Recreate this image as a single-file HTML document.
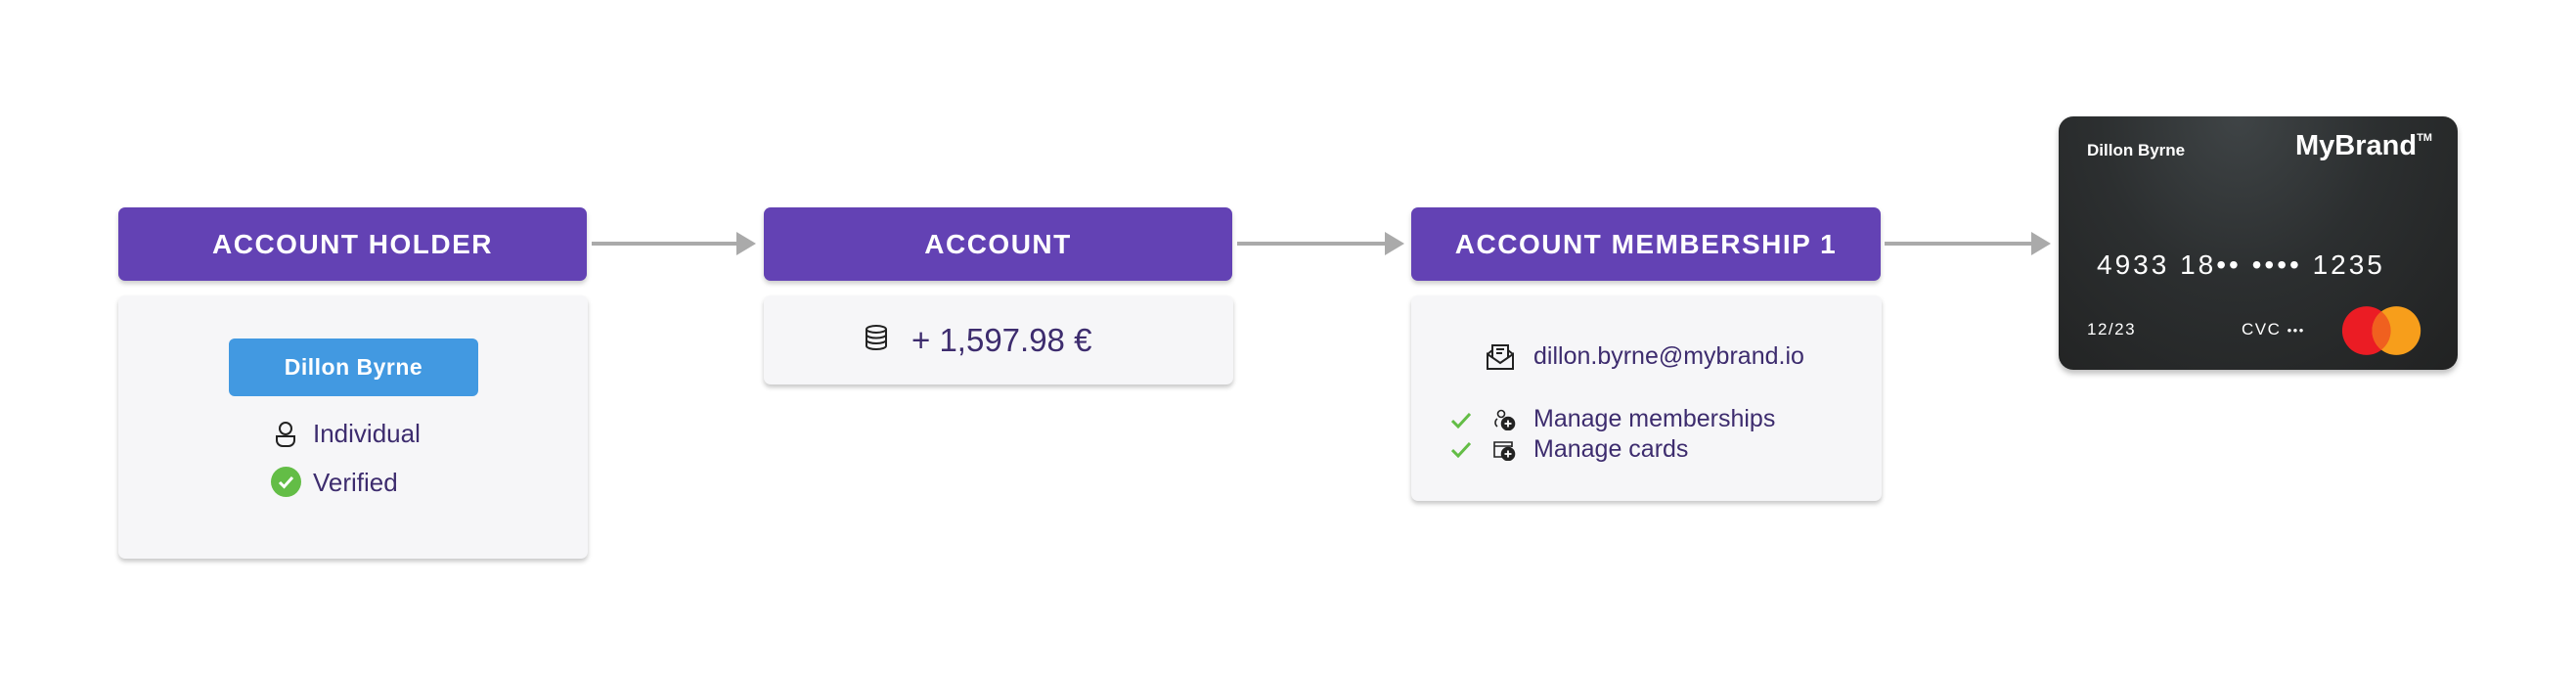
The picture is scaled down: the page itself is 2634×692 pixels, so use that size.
<!DOCTYPE html>
<html><head><meta charset="utf-8"><style>
*{margin:0;padding:0;box-sizing:border-box}
body{width:2634px;height:692px;background:#fff;position:relative;overflow:hidden;font-family:"Liberation Sans",sans-serif}
.hd{position:absolute;top:212px;height:75px;background:#6342b4;border-radius:7px;color:#fff;font-weight:bold;font-size:28px;letter-spacing:1.5px;display:flex;align-items:center;justify-content:center;box-shadow:0 3px 5px rgba(0,0,0,.2)}
.bd{position:absolute;top:302px;background:#f6f6f8;border-radius:7px;box-shadow:0 3px 5px rgba(0,0,0,.22)}
.t{position:absolute;color:#3d2c6e;font-size:26px;line-height:30px;white-space:nowrap}
.arr{position:absolute;top:247px;height:4px;background:#aaa}
.arr:after{content:"";position:absolute;right:-4px;top:-10px;border-left:20px solid #aaa;border-top:12px solid transparent;border-bottom:12px solid transparent}
svg{position:absolute}
</style></head><body>
<div class="hd" style="left:121px;width:479px">ACCOUNT HOLDER</div>
<div class="bd" style="left:121px;width:480px;height:269px"></div>
<div style="position:absolute;left:234px;top:346px;width:255px;height:59px;background:#4299e1;border-radius:6px;color:#fff;font-weight:bold;font-size:23px;letter-spacing:.5px;display:flex;align-items:center;justify-content:center">Dillon Byrne</div>
<svg style="left:280px;top:430px" width="24" height="28" viewBox="0 0 24 28" fill="none" stroke="#222" stroke-width="2"><circle cx="12" cy="8" r="6"/><path d="M3 16h18v4a6 6 0 0 1-6 6H9a6 6 0 0 1-6-6z"/></svg>
<div class="t" style="left:320px;top:428px">Individual</div>
<svg style="left:277px;top:477px" width="31" height="31" viewBox="0 0 31 31"><circle cx="15.5" cy="15.5" r="15.5" fill="#63bd46"/><path d="M9 16l4.5 4.5L22 11" stroke="#fff" stroke-width="3" fill="none"/></svg>
<div class="t" style="left:320px;top:478px">Verified</div>
<div class="arr" style="left:605px;width:164px"></div>

<div class="hd" style="left:781px;width:479px">ACCOUNT</div>
<div class="bd" style="left:781px;width:480px;height:91px"></div>
<svg style="left:884px;top:332px" width="24" height="28" viewBox="0 0 24 28" fill="none" stroke="#222" stroke-width="2"><ellipse cx="12" cy="4.5" rx="10" ry="3.5"/><path d="M2 4.5v17c0 2 4.5 3.5 10 3.5s10-1.5 10-3.5v-17M2 10c0 2 4.5 3.5 10 3.5S22 12 22 10M2 15.5c0 2 4.5 3.5 10 3.5s10-1.5 10-3.5"/></svg>
<div class="t" style="left:932px;top:329px;font-size:33px;line-height:38px">+ 1,597.98 €</div>
<div class="arr" style="left:1265px;width:167px"></div>

<div class="hd" style="left:1443px;width:480px">ACCOUNT MEMBERSHIP 1</div>
<div class="bd" style="left:1443px;width:481px;height:210px"></div>
<svg style="left:1519px;top:351px" width="30" height="28" viewBox="0 0 30 28" fill="none" stroke="#222" stroke-width="2"><path d="M2 11l13 9 13-9v15H2z"/><path d="M2 11l5-4M28 11l-5-4M7 14V2h16v12"/><path d="M11 6h8M11 10h6"/></svg>
<div class="t" style="left:1568px;top:349px;font-size:25px">dillon.byrne@mybrand.io</div>
<svg style="left:1484px;top:422px" width="20" height="16" viewBox="0 0 20 16"><path d="M1 8l6 6L19 1" stroke="#63bd46" stroke-width="3" fill="none"/></svg>
<svg style="left:1484px;top:452px" width="20" height="16" viewBox="0 0 20 16"><path d="M1 8l6 6L19 1" stroke="#63bd46" stroke-width="3" fill="none"/></svg>
<svg style="left:1526px;top:418px" width="24" height="22" viewBox="0 0 24 22" fill="none" stroke="#222" stroke-width="1.6"><circle cx="9" cy="5" r="3.5"/><path d="M5 18a5 5 0 0 1 0-8"/><circle cx="16" cy="15" r="6.5" fill="#222"/><path d="M16 11.5v7M12.5 15h7" stroke="#fff" stroke-width="1.8"/></svg>
<svg style="left:1526px;top:449px" width="24" height="22" viewBox="0 0 24 22" fill="none" stroke="#222" stroke-width="1.6"><path d="M10 18H2V3h18v5M2 7h18"/><circle cx="16" cy="15" r="6.5" fill="#222"/><path d="M16 11.5v7M12.5 15h7" stroke="#fff" stroke-width="1.8"/></svg>
<div class="t" style="left:1568px;top:413px;font-size:25px">Manage memberships</div>
<div class="t" style="left:1568px;top:444px;font-size:25px">Manage cards</div>
<div class="arr" style="left:1927px;width:166px"></div>

<div style="position:absolute;left:2105px;top:119px;width:408px;height:259px;border-radius:15px;background:radial-gradient(ellipse at 45% 0%,#3f4446 0%,#2c2f30 45%,#212222 100%);box-shadow:0 4px 6px rgba(0,0,0,.25)"></div>
<div style="position:absolute;left:2134px;top:144px;color:#fff;font-size:17px;font-weight:bold">Dillon Byrne</div>
<div style="position:absolute;left:2347px;top:133px;color:#fff;font-size:29px;font-weight:bold">MyBrand<sup style="font-size:11px;vertical-align:14px">TM</sup></div>
<div style="position:absolute;left:2144px;top:255px;color:#fff;font-size:28px;letter-spacing:3px;white-space:nowrap">4933 18•• •••• 1235</div>
<div style="position:absolute;left:2134px;top:327px;color:#fff;font-size:17px;letter-spacing:1.5px">12/23</div>
<div style="position:absolute;left:2292px;top:327px;color:#fff;font-size:17px;letter-spacing:1.5px">CVC <span style="font-size:13px">•••</span></div>
<svg style="left:2393px;top:311px" width="86" height="54" viewBox="0 0 90 56"><circle cx="28" cy="28" r="26" fill="#eb1c24"/><circle cx="60" cy="28" r="26" fill="#f79e1b"/><path d="M44 7.5a26 26 0 0 1 0 41a26 26 0 0 1 0-41z" fill="#f0601f"/></svg>
</body></html>
